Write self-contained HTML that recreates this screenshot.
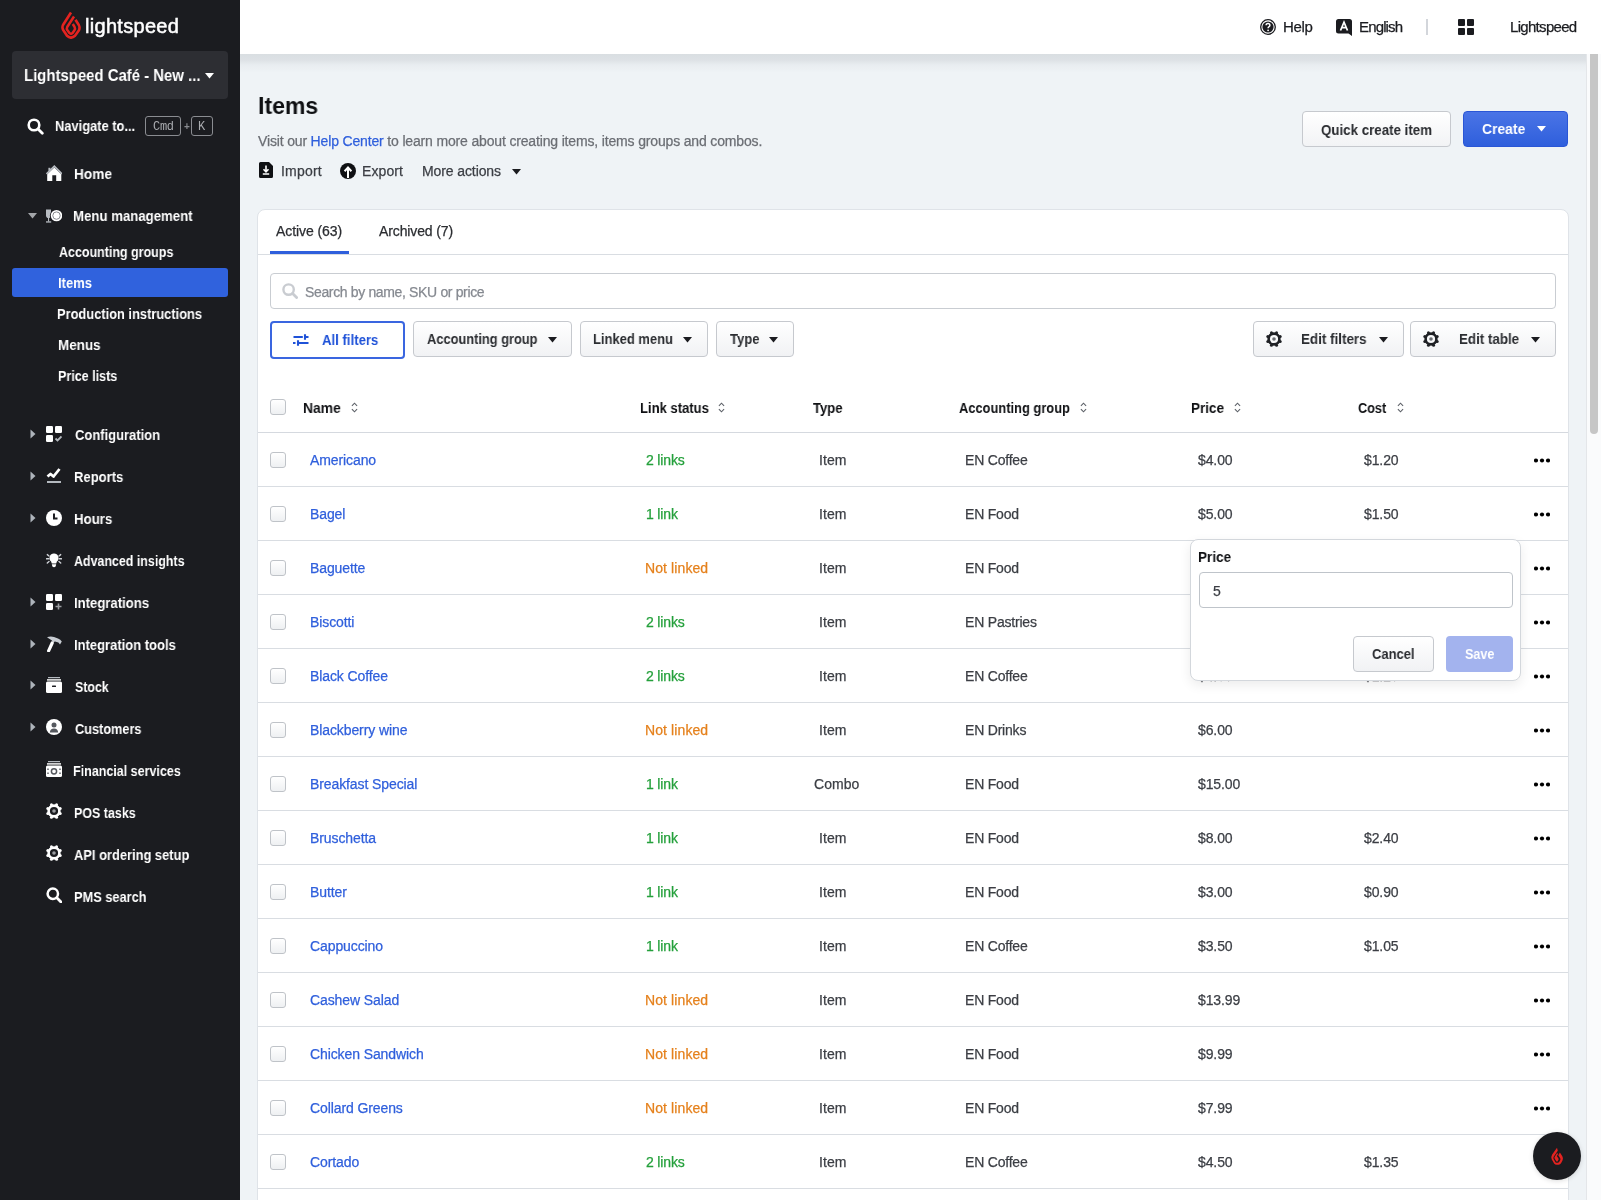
<!DOCTYPE html>
<html><head><meta charset="utf-8"><title>Items</title>
<style>
html,body{margin:0;padding:0;width:1601px;height:1200px;overflow:hidden;background:#eff3f6}
body{position:relative;font-family:"Liberation Sans",sans-serif}
.a{position:absolute}
.t{position:absolute;white-space:nowrap;will-change:transform}
.r{-webkit-text-stroke:0.25px currentColor}
</style></head><body>
<div class="a" style="left:0px;top:0px;width:240px;height:1200px;background:#1b1c20"></div>
<svg class="a" style="left:61px;top:11px" width="21" height="28" viewBox="0 0 21 28">
<path d="M10 1.5 L2 14 Q0.8 16.5 2.2 19 L6 24.8 Q10 28.5 14 24.8 L17.8 19.5 Q19.3 16.8 17.8 14 L14.5 8.8" fill="none" stroke="#e42320" stroke-width="2.6" stroke-linejoin="round"/>
<path d="M13 5.5 L6.2 16 Q5.4 17.5 6.3 19 L8.6 22.2 Q10 23.6 11.4 22.2 L13.6 19 Q14.4 17.5 13.6 16 L11.8 13" fill="none" stroke="#e42320" stroke-width="2.5" stroke-linejoin="round"/>
</svg>
<div class="t" style="left:84.5px;top:16.00px;font-size:20px;line-height:20px;font-weight:400;color:#ffffff;letter-spacing:0.3px;-webkit-text-stroke:0.5px #fff">lightspeed</div>
<div class="a" style="left:12px;top:51px;width:216px;height:48px;background:#2d2e33;border-radius:4px"></div>
<div class="t" style="left:23.52px;top:67.00px;font-size:17px;line-height:17px;font-weight:700;color:#ffffff;transform-origin:0 0;transform:scaleX(0.8774);">Lightspeed Café - New ...</div>
<svg class="a" style="left:205px;top:73px" width="9" height="6" viewBox="0 0 9 6"><path d="M0 0H9L4.5 5.5Z" fill="#fff"/></svg>
<svg class="a" style="left:27px;top:118px" width="17" height="17" viewBox="0 0 17 17"><circle cx="7" cy="7" r="5.3" fill="none" stroke="#fff" stroke-width="2.6"/><path d="M11 11L15.3 15.3" stroke="#fff" stroke-width="2.8" stroke-linecap="round"/></svg>
<div class="t" style="left:55.11px;top:119.00px;font-size:14.5px;line-height:14.5px;font-weight:700;color:#ffffff;transform-origin:0 0;transform:scaleX(0.8876);">Navigate to...</div>
<div class="a" style="left:145px;top:116px;width:36px;height:20px;border:1px solid #8a8c91;border-radius:3px;box-sizing:border-box"></div>
<div class="t" style="left:153px;top:121.00px;font-size:12px;line-height:12px;font-weight:400;color:#a9abaf;letter-spacing:-0.3px;font-family:'Liberation Mono'">Cmd</div>
<div class="t" style="left:183.5px;top:122.00px;font-size:10px;line-height:10px;font-weight:700;color:#8a8c91;letter-spacing:0px;">+</div>
<div class="a" style="left:191px;top:116px;width:22px;height:20px;border:1px solid #8a8c91;border-radius:3px;box-sizing:border-box"></div>
<div class="t" style="left:198px;top:121.00px;font-size:12px;line-height:12px;font-weight:400;color:#a9abaf;letter-spacing:0px;font-family:'Liberation Mono'">K</div>
<svg class="a" style="left:46px;top:165px" width="16" height="16" viewBox="0 0 16 16"><path d="M8.3 2.6L1.2 9.2V16H6.3V10.2H10.2V16H15.3V9.2Z" fill="#fff"/><path d="M0.5 8.9L8.3 1.2 16 8.9" fill="none" stroke="#b8bcc2" stroke-width="1.6"/><rect x="2.4" y="2.8" width="2" height="3" fill="#b8bcc2"/></svg>
<div class="t" style="left:73.56px;top:167.00px;font-size:14.6px;line-height:14.6px;font-weight:700;color:#ffffff;transform-origin:0 0;transform:scaleX(0.9359);">Home</div>
<svg class="a" style="left:28px;top:212.5px" width="9" height="6" viewBox="0 0 9 6"><path d="M0 0H9L4.5 5.5Z" fill="#a3a5a9"/></svg>
<svg class="a" style="left:46px;top:206.5px" width="16" height="16" viewBox="0 0 16 16"><path d="M0 2.5H5V8.2Q5 11 2.5 11T0 8.2Z" fill="#b8bcc2"/><rect x="2" y="10.5" width="1.1" height="4" fill="#b8bcc2"/><rect x="0" y="14.3" width="5.2" height="1.3" fill="#b8bcc2"/><circle cx="10.5" cy="8.6" r="6.6" fill="#1b1c20"/><circle cx="10.5" cy="8.6" r="5.7" fill="#fff"/><circle cx="10.5" cy="8.6" r="3.7" fill="none" stroke="#7a7d82" stroke-width="0.9"/></svg>
<div class="t" style="left:72.60px;top:209.00px;font-size:14.6px;line-height:14.6px;font-weight:700;color:#ffffff;transform-origin:0 0;transform:scaleX(0.9046);">Menu management</div>
<div class="t" style="left:58.50px;top:245.00px;font-size:14.6px;line-height:14.6px;font-weight:700;color:#ffffff;transform-origin:0 0;transform:scaleX(0.8545);">Accounting groups</div>
<div class="a" style="left:12px;top:268px;width:216px;height:29px;background:#3062dd;border-radius:3px"></div>
<div class="t" style="left:57.61px;top:276.00px;font-size:14.6px;line-height:14.6px;font-weight:700;color:#ffffff;transform-origin:0 0;transform:scaleX(0.8919);">Items</div>
<div class="t" style="left:57.12px;top:307.00px;font-size:14.6px;line-height:14.6px;font-weight:700;color:#ffffff;transform-origin:0 0;transform:scaleX(0.8810);">Production instructions</div>
<div class="t" style="left:57.58px;top:338.00px;font-size:14.6px;line-height:14.6px;font-weight:700;color:#ffffff;transform-origin:0 0;transform:scaleX(0.9222);">Menus</div>
<div class="t" style="left:57.64px;top:369.00px;font-size:14.6px;line-height:14.6px;font-weight:700;color:#ffffff;transform-origin:0 0;transform:scaleX(0.8603);">Price lists</div>
<svg class="a" style="left:30px;top:428.7px" width="6" height="10" viewBox="0 0 6 10"><path d="M0.5 0.5L5.5 5L0.5 9.5Z" fill="#aeb4bb"/></svg>
<svg class="a" style="left:46px;top:425.7px" width="16" height="16" viewBox="0 0 16 16"><rect x="0" y="0" width="7" height="7" rx="1.3" fill="#fff"/><rect x="9" y="0" width="7" height="7" rx="1.3" fill="#fff"/><rect x="0" y="9" width="7" height="7" rx="1.3" fill="#fff"/><path d="M9.5 12.5l2 2 4-4" stroke="#b4b9bf" stroke-width="1.8" fill="none"/></svg>
<div class="t" style="left:74.50px;top:428.00px;font-size:14.6px;line-height:14.6px;font-weight:700;color:#ffffff;transform-origin:0 0;transform:scaleX(0.8895);">Configuration</div>
<svg class="a" style="left:30px;top:470.6px" width="6" height="10" viewBox="0 0 6 10"><path d="M0.5 0.5L5.5 5L0.5 9.5Z" fill="#aeb4bb"/></svg>
<svg class="a" style="left:46px;top:467.6px" width="16" height="16" viewBox="0 0 16 16"><path d="M1.5 8.5L4.5 6 7.5 8.5 13.5 1" stroke="#fff" stroke-width="2.8" fill="none" stroke-linejoin="round"/><rect x="1" y="13" width="14" height="2" fill="#b4b9bf"/></svg>
<div class="t" style="left:73.61px;top:470.00px;font-size:14.6px;line-height:14.6px;font-weight:700;color:#ffffff;transform-origin:0 0;transform:scaleX(0.8944);">Reports</div>
<svg class="a" style="left:30px;top:512.6px" width="6" height="10" viewBox="0 0 6 10"><path d="M0.5 0.5L5.5 5L0.5 9.5Z" fill="#aeb4bb"/></svg>
<svg class="a" style="left:46px;top:509.6px" width="16" height="16" viewBox="0 0 16 16"><circle cx="8" cy="8" r="8" fill="#fff"/><path d="M8 3.5V8.5h3.5" stroke="#1b1c20" stroke-width="2" fill="none"/></svg>
<div class="t" style="left:73.59px;top:512.00px;font-size:14.6px;line-height:14.6px;font-weight:700;color:#ffffff;transform-origin:0 0;transform:scaleX(0.9098);">Hours</div>
<svg class="a" style="left:46px;top:551.5px" width="16" height="16" viewBox="0 0 16 16"><path d="M8 1.6A4.4 4.4 0 0 0 5.1 9.4L5.8 11.4H10.2L10.9 9.4A4.4 4.4 0 0 0 8 1.6Z" fill="#fff"/><path d="M5.8 12.3H10.2L9.6 14.5Q8 15.8 6.4 14.5Z" fill="#fff"/><path d="M1.3 2.6L3 4M0.4 6.8H2.8M1.3 11L3 9.5M14.7 2.6L13 4M15.6 6.8H13.2M14.7 11L13 9.5" stroke="#d0d3d8" stroke-width="1.4" stroke-linecap="round"/></svg>
<div class="t" style="left:73.50px;top:554.00px;font-size:14.6px;line-height:14.6px;font-weight:700;color:#ffffff;transform-origin:0 0;transform:scaleX(0.8515);">Advanced insights</div>
<svg class="a" style="left:30px;top:596.5px" width="6" height="10" viewBox="0 0 6 10"><path d="M0.5 0.5L5.5 5L0.5 9.5Z" fill="#aeb4bb"/></svg>
<svg class="a" style="left:46px;top:593.5px" width="16" height="16" viewBox="0 0 16 16"><rect x="0" y="0" width="7" height="7" rx="1.3" fill="#fff"/><rect x="9" y="0" width="7" height="7" rx="1.3" fill="#fff"/><rect x="0" y="9" width="7" height="7" rx="1.3" fill="#fff"/><path d="M12.5 9.5v6M9.5 12.5h6" stroke="#9a9ca0" stroke-width="1.6"/></svg>
<div class="t" style="left:73.60px;top:596.00px;font-size:14.6px;line-height:14.6px;font-weight:700;color:#ffffff;transform-origin:0 0;transform:scaleX(0.8988);">Integrations</div>
<svg class="a" style="left:30px;top:638.5px" width="6" height="10" viewBox="0 0 6 10"><path d="M0.5 0.5L5.5 5L0.5 9.5Z" fill="#aeb4bb"/></svg>
<svg class="a" style="left:46px;top:635.5px" width="16" height="16" viewBox="0 0 16 16"><path d="M1 1.3Q4 0 8 0.9L12 2.6Q14.6 3.8 15.8 5.6L14 8.6 12.4 6.6 9 5.6 7.2 6.2 5.6 4.2Q3.2 2.6 1 1.3Z" fill="#c8ccd2"/><path d="M6.2 7L2.6 14.8" stroke="#fff" stroke-width="3.2" stroke-linecap="round"/></svg>
<div class="t" style="left:73.61px;top:638.00px;font-size:14.6px;line-height:14.6px;font-weight:700;color:#ffffff;transform-origin:0 0;transform:scaleX(0.8903);">Integration tools</div>
<svg class="a" style="left:30px;top:680.4px" width="6" height="10" viewBox="0 0 6 10"><path d="M0.5 0.5L5.5 5L0.5 9.5Z" fill="#aeb4bb"/></svg>
<svg class="a" style="left:46px;top:677.4px" width="16" height="16" viewBox="0 0 16 16"><rect x="2" y="0" width="12" height="1.2" fill="#b4b9bf"/><rect x="1" y="2.2" width="14" height="1.4" fill="#fff"/><rect x="0" y="4.6" width="16" height="11.4" rx="1.5" fill="#fff"/><rect x="6" y="8.6" width="4" height="1.3" rx="0.5" fill="#1b1c20"/></svg>
<div class="t" style="left:74.50px;top:680.00px;font-size:14.6px;line-height:14.6px;font-weight:700;color:#ffffff;transform-origin:0 0;transform:scaleX(0.8500);">Stock</div>
<svg class="a" style="left:30px;top:722.4px" width="6" height="10" viewBox="0 0 6 10"><path d="M0.5 0.5L5.5 5L0.5 9.5Z" fill="#aeb4bb"/></svg>
<svg class="a" style="left:46px;top:719.4px" width="16" height="16" viewBox="0 0 16 16"><circle cx="8" cy="8" r="8" fill="#fff"/><circle cx="8" cy="6" r="2.5" fill="#55585e"/><path d="M3.8 13.4Q4.2 9.4 8 9.4T12.2 13.4Z" fill="#55585e"/></svg>
<div class="t" style="left:74.50px;top:722.00px;font-size:14.6px;line-height:14.6px;font-weight:700;color:#ffffff;transform-origin:0 0;transform:scaleX(0.8724);">Customers</div>
<svg class="a" style="left:46px;top:761.3px" width="16" height="16" viewBox="0 0 16 16"><rect x="2" y="0" width="12" height="1.2" fill="#b4b9bf"/><rect x="1" y="2.2" width="14" height="1.4" fill="#fff"/><rect x="0" y="4.6" width="16" height="11.4" rx="1.5" fill="#fff"/><circle cx="8" cy="10.3" r="2.6" fill="none" stroke="#55585e" stroke-width="1.5"/><path d="M2 7.5v1.5M14 7.5v1.5M2 11.5v1.5M14 11.5v1.5" stroke="#55585e" stroke-width="1.4"/></svg>
<div class="t" style="left:72.74px;top:764.00px;font-size:14.6px;line-height:14.6px;font-weight:700;color:#ffffff;transform-origin:0 0;transform:scaleX(0.8568);">Financial services</div>
<svg class="a" style="left:46px;top:803.2px" width="16" height="16" viewBox="0 0 16 16"><circle cx="8" cy="8" r="5.4" fill="none" stroke="#fff" stroke-width="2.6"/><circle cx="14.19" cy="10.56" r="1.5" fill="#fff"/><circle cx="10.56" cy="14.19" r="1.5" fill="#fff"/><circle cx="5.44" cy="14.19" r="1.5" fill="#fff"/><circle cx="1.81" cy="10.56" r="1.5" fill="#fff"/><circle cx="1.81" cy="5.44" r="1.5" fill="#fff"/><circle cx="5.44" cy="1.81" r="1.5" fill="#fff"/><circle cx="10.56" cy="1.81" r="1.5" fill="#fff"/><circle cx="14.19" cy="5.44" r="1.5" fill="#fff"/><circle cx="8" cy="8" r="1.8" fill="#9a9ca0"/></svg>
<div class="t" style="left:74.15px;top:806.00px;font-size:14.6px;line-height:14.6px;font-weight:700;color:#ffffff;transform-origin:0 0;transform:scaleX(0.8549);">POS tasks</div>
<svg class="a" style="left:46px;top:845.2px" width="16" height="16" viewBox="0 0 16 16"><circle cx="8" cy="8" r="5.4" fill="none" stroke="#fff" stroke-width="2.6"/><circle cx="14.19" cy="10.56" r="1.5" fill="#fff"/><circle cx="10.56" cy="14.19" r="1.5" fill="#fff"/><circle cx="5.44" cy="14.19" r="1.5" fill="#fff"/><circle cx="1.81" cy="10.56" r="1.5" fill="#fff"/><circle cx="1.81" cy="5.44" r="1.5" fill="#fff"/><circle cx="5.44" cy="1.81" r="1.5" fill="#fff"/><circle cx="10.56" cy="1.81" r="1.5" fill="#fff"/><circle cx="14.19" cy="5.44" r="1.5" fill="#fff"/><circle cx="8" cy="8" r="1.8" fill="#9a9ca0"/></svg>
<div class="t" style="left:73.50px;top:848.00px;font-size:14.6px;line-height:14.6px;font-weight:700;color:#ffffff;transform-origin:0 0;transform:scaleX(0.8831);">API ordering setup</div>
<svg class="a" style="left:46px;top:887.2px" width="16" height="16" viewBox="0 0 16 16"><circle cx="6.8" cy="6.8" r="5.2" fill="none" stroke="#fff" stroke-width="2.5"/><path d="M10.8 10.8L15 15" stroke="#fff" stroke-width="2.8" stroke-linecap="round"/></svg>
<div class="t" style="left:73.62px;top:890.00px;font-size:14.6px;line-height:14.6px;font-weight:700;color:#ffffff;transform-origin:0 0;transform:scaleX(0.8765);">PMS search</div>
<div class="a" style="left:240px;top:0px;width:1361px;height:54px;background:#ffffff;z-index:5"></div>
<div class="a" style="left:240px;top:54px;width:1346px;height:20px;background:linear-gradient(rgba(40,50,60,0.11),rgba(40,50,60,0.09) 6px,rgba(40,50,60,0.03) 11px,rgba(40,50,60,0) 19px);z-index:5"></div>
<svg class="a" style="left:1260px;top:19px;z-index:6" width="16" height="16" viewBox="0 0 16 16"><circle cx="8" cy="8" r="7.3" fill="none" stroke="#1b1c20" stroke-width="1.3"/><circle cx="8" cy="8" r="5.6" fill="#1b1c20"/><path d="M6.1 6.3Q6.1 4.4 8 4.4T9.9 6.2Q9.9 7.2 8.8 7.8 8.1 8.2 8.1 9.2" fill="none" stroke="#fff" stroke-width="1.5"/><circle cx="8.1" cy="11.3" r="0.9" fill="#fff"/></svg>
<div class="t r" style="left:1282.5px;top:19.00px;font-size:15px;line-height:15px;font-weight:400;color:#1b1c20;letter-spacing:-0.3px;z-index:6;">Help</div>
<svg class="a" style="left:1336px;top:19px;z-index:6" width="16" height="17" viewBox="0 0 16 17"><path d="M2.5 0h11A2.5 2.5 0 0 1 16 2.5V17l-3.5-2.5h-10A2.5 2.5 0 0 1 0 12V2.5A2.5 2.5 0 0 1 2.5 0Z" fill="#1b1c20"/><path d="M4.5 11.5L8 3.2 11.5 11.5M5.8 8.6h4.4" fill="none" stroke="#fff" stroke-width="1.7"/></svg>
<div class="t r" style="left:1358.5px;top:19.00px;font-size:15px;line-height:15px;font-weight:400;color:#1b1c20;letter-spacing:-0.85px;z-index:6;">English</div>
<div class="a" style="left:1426px;top:19px;width:2px;height:16px;background:#d3d6db;z-index:6"></div>
<svg class="a" style="left:1458px;top:19px;z-index:6" width="16" height="16" viewBox="0 0 16 16"><rect x="0" y="0" width="7" height="7" rx="1" fill="#1b1c20"/><rect x="9" y="0" width="7" height="7" rx="1" fill="#1b1c20"/><rect x="0" y="9" width="7" height="7" rx="1" fill="#1b1c20"/><rect x="9" y="9" width="7" height="7" rx="1" fill="#1b1c20"/></svg>
<div class="t r" style="left:1510px;top:19.00px;font-size:15px;line-height:15px;font-weight:400;color:#1b1c20;letter-spacing:-0.69px;z-index:6;">Lightspeed</div>
<div class="a" style="left:1586px;top:54px;width:15px;height:1146px;background:#fafbfc;border-left:1px solid #e4e6e9;box-sizing:border-box;z-index:6"></div>
<div class="a" style="left:1590px;top:54px;width:8px;height:380px;background:#c6c6c6;border-radius:0 0 4px 4px;z-index:6"></div>
<div class="t" style="left:258.04px;top:94.00px;font-size:24px;line-height:24px;font-weight:700;color:#0f1013;transform-origin:0 0;transform:scaleX(0.9607);">Items</div>
<div class="t r" style="left:258px;top:134.00px;font-size:14px;line-height:14px;font-weight:400;color:#6b6e74;letter-spacing:-0.16px;">Visit our <span style="color:#2f5fdc">Help Center</span> to learn more about creating items, items groups and combos.</div>
<svg class="a" style="left:259px;top:162px" width="14" height="16" viewBox="0 0 14 16"><path d="M1.5 0H10L14 4V14.5A1.5 1.5 0 0 1 12.5 16H1.5A1.5 1.5 0 0 1 0 14.5V1.5A1.5 1.5 0 0 1 1.5 0Z" fill="#0f1013"/><path d="M7 3.5V9.5M4.5 7.2L7 9.8 9.5 7.2M3.8 12h6.4" stroke="#fff" stroke-width="1.6" fill="none"/></svg>
<div class="t r" style="left:280.6px;top:164.00px;font-size:14px;line-height:14px;font-weight:400;color:#3b3e44;letter-spacing:0.2px;">Import</div>
<svg class="a" style="left:340px;top:163px" width="16" height="16" viewBox="0 0 16 16"><circle cx="8" cy="8" r="8" fill="#0f1013"/><path d="M8 15V5M4.6 8.3L8 4.6 11.4 8.3" stroke="#fff" stroke-width="2" fill="none"/></svg>
<div class="t r" style="left:362.4px;top:164.00px;font-size:14px;line-height:14px;font-weight:400;color:#3b3e44;letter-spacing:0.1px;">Export</div>
<div class="t r" style="left:422.4px;top:164.00px;font-size:14px;line-height:14px;font-weight:400;color:#3b3e44;letter-spacing:-0.1px;">More actions</div>
<svg class="a" style="left:512px;top:168.5px" width="9" height="6" viewBox="0 0 9 6"><path d="M0 0H9L4.5 5.5Z" fill="#1b1c20"/></svg>
<div class="a" style="left:1302px;top:111px;width:149px;height:36px;background:linear-gradient(#ffffff,#f2f3f5);border:1px solid #c6c9ce;border-radius:4px;box-sizing:border-box"></div>
<div class="t" style="left:1321.00px;top:122.00px;font-size:15.5px;line-height:15.5px;font-weight:700;color:#2b2d31;transform-origin:0 0;transform:scaleX(0.8589);">Quick create item</div>
<div class="a" style="left:1463px;top:111px;width:105px;height:36px;background:linear-gradient(#4a74e6,#2f5fdc);border:1px solid #2a56d6;border-radius:4px;box-sizing:border-box"></div>
<div class="t" style="left:1482.00px;top:121.00px;font-size:15.5px;line-height:15.5px;font-weight:700;color:#ffffff;transform-origin:0 0;transform:scaleX(0.8958);">Create</div>
<svg class="a" style="left:1537px;top:126px" width="9" height="6" viewBox="0 0 9 6"><path d="M0 0H9L4.5 5.5Z" fill="#fff"/></svg>
<div class="a" style="left:257px;top:209px;width:1312px;height:1100px;background:#fff;border:1px solid #dfe3e8;border-radius:8px;box-sizing:border-box"></div>
<div class="t r" style="left:276.3px;top:224.00px;font-size:14px;line-height:14px;font-weight:400;color:#2b2d31;letter-spacing:-0.08px;">Active (63)</div>
<div class="t r" style="left:378.9px;top:224.00px;font-size:14px;line-height:14px;font-weight:400;color:#2b2d31;letter-spacing:-0.12px;">Archived (7)</div>
<div class="a" style="left:258px;top:254px;width:1310px;height:1px;background:#d9dde2"></div>
<div class="a" style="left:270px;top:251px;width:79px;height:3px;background:#2f5fdc"></div>
<div class="a" style="left:270px;top:273px;width:1286px;height:36px;background:#fff;border:1px solid #c9cdd2;border-radius:4px;box-sizing:border-box"></div>
<svg class="a" style="left:282px;top:283px" width="16" height="16" viewBox="0 0 16 16"><circle cx="6.6" cy="6.6" r="5.2" fill="none" stroke="#c9ccd1" stroke-width="2.4"/><path d="M10.6 10.6L14.6 14.6" stroke="#c9ccd1" stroke-width="2.8" stroke-linecap="round"/></svg>
<div class="t r" style="left:305.3px;top:285.00px;font-size:14px;line-height:14px;font-weight:400;color:#858990;letter-spacing:-0.35px;">Search by name, SKU or price</div>
<div class="a" style="left:270px;top:321px;width:135px;height:38px;background:#fff;border:2px solid #3a66e0;border-radius:4px;box-sizing:border-box"></div>
<svg class="a" style="left:292px;top:334px" width="18" height="13" viewBox="0 0 18 13"><path d="M1.5 3H10.8M13 3H16.5M1 9H3.5M6 9H16.5" stroke="#1f52d8" stroke-width="1.9"/><path d="M13 0.3V5.7M6 6.3V11.7" stroke="#1f52d8" stroke-width="2.1"/></svg>
<div class="t" style="left:321.50px;top:332.00px;font-size:15px;line-height:15px;font-weight:700;color:#1f52d8;transform-origin:0 0;transform:scaleX(0.8781);">All filters</div>
<div class="a" style="left:413px;top:321px;width:159px;height:36px;background:linear-gradient(#ffffff,#f1f2f4);border:1px solid #c6c9ce;border-radius:4px;box-sizing:border-box"></div>
<div class="t" style="left:426.80px;top:332.00px;font-size:14.8px;line-height:14.8px;font-weight:700;color:#2b2d31;transform-origin:0 0;transform:scaleX(0.8677);">Accounting group</div>
<svg class="a" style="left:547.5px;top:337px" width="9" height="6" viewBox="0 0 9 6"><path d="M0 0H9L4.5 5.5Z" fill="#1b1c20"/></svg>
<div class="a" style="left:580px;top:321px;width:128px;height:36px;background:linear-gradient(#ffffff,#f1f2f4);border:1px solid #c6c9ce;border-radius:4px;box-sizing:border-box"></div>
<div class="t" style="left:592.62px;top:332.00px;font-size:14.8px;line-height:14.8px;font-weight:700;color:#2b2d31;transform-origin:0 0;transform:scaleX(0.8756);">Linked menu</div>
<svg class="a" style="left:683px;top:337px" width="9" height="6" viewBox="0 0 9 6"><path d="M0 0H9L4.5 5.5Z" fill="#1b1c20"/></svg>
<div class="a" style="left:716px;top:321px;width:78px;height:36px;background:linear-gradient(#ffffff,#f1f2f4);border:1px solid #c6c9ce;border-radius:4px;box-sizing:border-box"></div>
<div class="t" style="left:729.50px;top:332.00px;font-size:14.8px;line-height:14.8px;font-weight:700;color:#2b2d31;transform-origin:0 0;transform:scaleX(0.8818);">Type</div>
<svg class="a" style="left:769px;top:337px" width="9" height="6" viewBox="0 0 9 6"><path d="M0 0H9L4.5 5.5Z" fill="#1b1c20"/></svg>
<div class="a" style="left:1253px;top:321px;width:151px;height:36px;background:linear-gradient(#ffffff,#f1f2f4);border:1px solid #c6c9ce;border-radius:4px;box-sizing:border-box"></div>
<svg class="a" style="left:1266px;top:331px" width="16" height="16" viewBox="0 0 16 16"><circle cx="8" cy="8" r="5.4" fill="none" stroke="#1f2125" stroke-width="2.6"/><circle cx="14.19" cy="10.56" r="1.5" fill="#1f2125"/><circle cx="10.56" cy="14.19" r="1.5" fill="#1f2125"/><circle cx="5.44" cy="14.19" r="1.5" fill="#1f2125"/><circle cx="1.81" cy="10.56" r="1.5" fill="#1f2125"/><circle cx="1.81" cy="5.44" r="1.5" fill="#1f2125"/><circle cx="5.44" cy="1.81" r="1.5" fill="#1f2125"/><circle cx="10.56" cy="1.81" r="1.5" fill="#1f2125"/><circle cx="14.19" cy="5.44" r="1.5" fill="#1f2125"/><circle cx="8" cy="8" r="1.8" fill="#6b6e73"/></svg>
<div class="t" style="left:1301.49px;top:332.00px;font-size:14.8px;line-height:14.8px;font-weight:700;color:#2b2d31;transform-origin:0 0;transform:scaleX(0.9070);">Edit filters</div>
<svg class="a" style="left:1379px;top:337px" width="9" height="6" viewBox="0 0 9 6"><path d="M0 0H9L4.5 5.5Z" fill="#1b1c20"/></svg>
<div class="a" style="left:1410px;top:321px;width:146px;height:36px;background:linear-gradient(#ffffff,#f1f2f4);border:1px solid #c6c9ce;border-radius:4px;box-sizing:border-box"></div>
<svg class="a" style="left:1423px;top:331px" width="16" height="16" viewBox="0 0 16 16"><circle cx="8" cy="8" r="5.4" fill="none" stroke="#1f2125" stroke-width="2.6"/><circle cx="14.19" cy="10.56" r="1.5" fill="#1f2125"/><circle cx="10.56" cy="14.19" r="1.5" fill="#1f2125"/><circle cx="5.44" cy="14.19" r="1.5" fill="#1f2125"/><circle cx="1.81" cy="10.56" r="1.5" fill="#1f2125"/><circle cx="1.81" cy="5.44" r="1.5" fill="#1f2125"/><circle cx="5.44" cy="1.81" r="1.5" fill="#1f2125"/><circle cx="10.56" cy="1.81" r="1.5" fill="#1f2125"/><circle cx="14.19" cy="5.44" r="1.5" fill="#1f2125"/><circle cx="8" cy="8" r="1.8" fill="#6b6e73"/></svg>
<div class="t" style="left:1458.80px;top:332.00px;font-size:14.8px;line-height:14.8px;font-weight:700;color:#2b2d31;transform-origin:0 0;transform:scaleX(0.9031);">Edit table</div>
<svg class="a" style="left:1531px;top:337px" width="9" height="6" viewBox="0 0 9 6"><path d="M0 0H9L4.5 5.5Z" fill="#1b1c20"/></svg>
<div class="a" style="left:270px;top:399px;width:16px;height:16px;background:linear-gradient(#ffffff,#eef0f2);border:1px solid #bfc3c8;border-radius:3px;box-sizing:border-box"></div>
<div class="t" style="left:303.04px;top:401.00px;font-size:14.5px;line-height:14.5px;font-weight:700;color:#0f1013;transform-origin:0 0;transform:scaleX(0.9553);">Name</div>
<svg class="a" style="left:350.5px;top:401.5px" width="7" height="11" viewBox="0 0 7 11"><path d="M0.9 3.9L3.5 1.2 6.1 3.9M0.9 7.1L3.5 9.8 6.1 7.1" stroke="#5d6168" stroke-width="1.1" fill="none"/></svg>
<div class="t" style="left:639.50px;top:401.00px;font-size:14.5px;line-height:14.5px;font-weight:700;color:#0f1013;transform-origin:0 0;transform:scaleX(0.9000);">Link status</div>
<svg class="a" style="left:717.5px;top:401.5px" width="7" height="11" viewBox="0 0 7 11"><path d="M0.9 3.9L3.5 1.2 6.1 3.9M0.9 7.1L3.5 9.8 6.1 7.1" stroke="#5d6168" stroke-width="1.1" fill="none"/></svg>
<div class="t" style="left:812.80px;top:401.00px;font-size:14.5px;line-height:14.5px;font-weight:700;color:#0f1013;transform-origin:0 0;transform:scaleX(0.9000);">Type</div>
<div class="t" style="left:958.80px;top:401.00px;font-size:14.5px;line-height:14.5px;font-weight:700;color:#0f1013;transform-origin:0 0;transform:scaleX(0.8880);">Accounting group</div>
<svg class="a" style="left:1079.5px;top:401.5px" width="7" height="11" viewBox="0 0 7 11"><path d="M0.9 3.9L3.5 1.2 6.1 3.9M0.9 7.1L3.5 9.8 6.1 7.1" stroke="#5d6168" stroke-width="1.1" fill="none"/></svg>
<div class="t" style="left:1190.97px;top:401.00px;font-size:14.5px;line-height:14.5px;font-weight:700;color:#0f1013;transform-origin:0 0;transform:scaleX(0.9294);">Price</div>
<svg class="a" style="left:1233.5px;top:401.5px" width="7" height="11" viewBox="0 0 7 11"><path d="M0.9 3.9L3.5 1.2 6.1 3.9M0.9 7.1L3.5 9.8 6.1 7.1" stroke="#5d6168" stroke-width="1.1" fill="none"/></svg>
<div class="t" style="left:1358.10px;top:401.00px;font-size:14.5px;line-height:14.5px;font-weight:700;color:#0f1013;transform-origin:0 0;transform:scaleX(0.8727);">Cost</div>
<svg class="a" style="left:1397px;top:401.5px" width="7" height="11" viewBox="0 0 7 11"><path d="M0.9 3.9L3.5 1.2 6.1 3.9M0.9 7.1L3.5 9.8 6.1 7.1" stroke="#5d6168" stroke-width="1.1" fill="none"/></svg>
<div class="a" style="left:258px;top:432px;width:1310px;height:1px;background:#d5d9df"></div>
<div class="a" style="left:270px;top:452.4px;width:16px;height:16px;background:linear-gradient(#ffffff,#eef0f2);border:1px solid #bfc3c8;border-radius:3px;box-sizing:border-box"></div>
<div class="t r" style="left:310.3px;top:453.00px;font-size:14px;line-height:14px;font-weight:400;color:#2f5fdc;letter-spacing:-0.1px;">Americano</div>
<div class="t r" style="left:646.4px;top:453.00px;font-size:14px;line-height:14px;font-weight:400;color:#24a03b;letter-spacing:-0.16px;">2 links</div>
<div class="t r" style="left:819.4px;top:453.00px;font-size:14px;line-height:14px;font-weight:400;color:#3b3e44;letter-spacing:0.05px;">Item</div>
<div class="t r" style="left:964.8px;top:453.00px;font-size:14px;line-height:14px;font-weight:400;color:#3b3e44;letter-spacing:-0.2px;">EN Coffee</div>
<div class="t r" style="left:1197.5px;top:453.00px;font-size:14px;line-height:14px;font-weight:400;color:#3b3e44;letter-spacing:-0.1px;">$4.00</div>
<div class="t r" style="left:1363.5px;top:453.00px;font-size:14px;line-height:14px;font-weight:400;color:#3b3e44;letter-spacing:-0.1px;">$1.20</div>
<svg class="a" style="left:1534px;top:457.5px" width="16" height="5" viewBox="0 0 16 5"><circle cx="2" cy="2.5" r="2.1" fill="#000"/><circle cx="8" cy="2.5" r="2.1" fill="#000"/><circle cx="14" cy="2.5" r="2.1" fill="#000"/></svg>
<div class="a" style="left:258px;top:486px;width:1310px;height:1px;background:#d9dde2"></div>
<div class="a" style="left:270px;top:506.4px;width:16px;height:16px;background:linear-gradient(#ffffff,#eef0f2);border:1px solid #bfc3c8;border-radius:3px;box-sizing:border-box"></div>
<div class="t r" style="left:310.3px;top:507.00px;font-size:14px;line-height:14px;font-weight:400;color:#2f5fdc;letter-spacing:-0.1px;">Bagel</div>
<div class="t r" style="left:646.4px;top:507.00px;font-size:14px;line-height:14px;font-weight:400;color:#24a03b;letter-spacing:-0.16px;">1 link</div>
<div class="t r" style="left:819.4px;top:507.00px;font-size:14px;line-height:14px;font-weight:400;color:#3b3e44;letter-spacing:0.05px;">Item</div>
<div class="t r" style="left:964.8px;top:507.00px;font-size:14px;line-height:14px;font-weight:400;color:#3b3e44;letter-spacing:-0.2px;">EN Food</div>
<div class="t r" style="left:1197.5px;top:507.00px;font-size:14px;line-height:14px;font-weight:400;color:#3b3e44;letter-spacing:-0.1px;">$5.00</div>
<div class="t r" style="left:1363.5px;top:507.00px;font-size:14px;line-height:14px;font-weight:400;color:#3b3e44;letter-spacing:-0.1px;">$1.50</div>
<svg class="a" style="left:1534px;top:511.5px" width="16" height="5" viewBox="0 0 16 5"><circle cx="2" cy="2.5" r="2.1" fill="#000"/><circle cx="8" cy="2.5" r="2.1" fill="#000"/><circle cx="14" cy="2.5" r="2.1" fill="#000"/></svg>
<div class="a" style="left:258px;top:540px;width:1310px;height:1px;background:#d9dde2"></div>
<div class="a" style="left:270px;top:560.4px;width:16px;height:16px;background:linear-gradient(#ffffff,#eef0f2);border:1px solid #bfc3c8;border-radius:3px;box-sizing:border-box"></div>
<div class="t r" style="left:310.3px;top:561.00px;font-size:14px;line-height:14px;font-weight:400;color:#2f5fdc;letter-spacing:-0.1px;">Baguette</div>
<div class="t r" style="left:645px;top:561.00px;font-size:14px;line-height:14px;font-weight:400;color:#e5811c;letter-spacing:0.1px;">Not linked</div>
<div class="t r" style="left:819.4px;top:561.00px;font-size:14px;line-height:14px;font-weight:400;color:#3b3e44;letter-spacing:0.05px;">Item</div>
<div class="t r" style="left:964.8px;top:561.00px;font-size:14px;line-height:14px;font-weight:400;color:#3b3e44;letter-spacing:-0.2px;">EN Food</div>
<div class="t r" style="left:1197.5px;top:561.00px;font-size:14px;line-height:14px;font-weight:400;color:#3b3e44;letter-spacing:-0.1px;">$4.00</div>
<div class="t r" style="left:1363.5px;top:561.00px;font-size:14px;line-height:14px;font-weight:400;color:#3b3e44;letter-spacing:-0.1px;">$1.20</div>
<svg class="a" style="left:1534px;top:565.5px" width="16" height="5" viewBox="0 0 16 5"><circle cx="2" cy="2.5" r="2.1" fill="#000"/><circle cx="8" cy="2.5" r="2.1" fill="#000"/><circle cx="14" cy="2.5" r="2.1" fill="#000"/></svg>
<div class="a" style="left:258px;top:594px;width:1310px;height:1px;background:#d9dde2"></div>
<div class="a" style="left:270px;top:614.4px;width:16px;height:16px;background:linear-gradient(#ffffff,#eef0f2);border:1px solid #bfc3c8;border-radius:3px;box-sizing:border-box"></div>
<div class="t r" style="left:310.3px;top:615.00px;font-size:14px;line-height:14px;font-weight:400;color:#2f5fdc;letter-spacing:-0.1px;">Biscotti</div>
<div class="t r" style="left:646.4px;top:615.00px;font-size:14px;line-height:14px;font-weight:400;color:#24a03b;letter-spacing:-0.16px;">2 links</div>
<div class="t r" style="left:819.4px;top:615.00px;font-size:14px;line-height:14px;font-weight:400;color:#3b3e44;letter-spacing:0.05px;">Item</div>
<div class="t r" style="left:964.8px;top:615.00px;font-size:14px;line-height:14px;font-weight:400;color:#3b3e44;letter-spacing:-0.2px;">EN Pastries</div>
<div class="t r" style="left:1197.5px;top:615.00px;font-size:14px;line-height:14px;font-weight:400;color:#3b3e44;letter-spacing:-0.1px;">$4.00</div>
<div class="t r" style="left:1363.5px;top:615.00px;font-size:14px;line-height:14px;font-weight:400;color:#3b3e44;letter-spacing:-0.1px;">$1.20</div>
<svg class="a" style="left:1534px;top:619.5px" width="16" height="5" viewBox="0 0 16 5"><circle cx="2" cy="2.5" r="2.1" fill="#000"/><circle cx="8" cy="2.5" r="2.1" fill="#000"/><circle cx="14" cy="2.5" r="2.1" fill="#000"/></svg>
<div class="a" style="left:258px;top:648px;width:1310px;height:1px;background:#d9dde2"></div>
<div class="a" style="left:270px;top:668.4px;width:16px;height:16px;background:linear-gradient(#ffffff,#eef0f2);border:1px solid #bfc3c8;border-radius:3px;box-sizing:border-box"></div>
<div class="t r" style="left:310.3px;top:669.00px;font-size:14px;line-height:14px;font-weight:400;color:#2f5fdc;letter-spacing:-0.1px;">Black Coffee</div>
<div class="t r" style="left:646.4px;top:669.00px;font-size:14px;line-height:14px;font-weight:400;color:#24a03b;letter-spacing:-0.16px;">2 links</div>
<div class="t r" style="left:819.4px;top:669.00px;font-size:14px;line-height:14px;font-weight:400;color:#3b3e44;letter-spacing:0.05px;">Item</div>
<div class="t r" style="left:964.8px;top:669.00px;font-size:14px;line-height:14px;font-weight:400;color:#3b3e44;letter-spacing:-0.2px;">EN Coffee</div>
<div class="t r" style="left:1197.5px;top:669.00px;font-size:14px;line-height:14px;font-weight:400;color:#3b3e44;letter-spacing:-0.1px;">$4.00</div>
<div class="t r" style="left:1363.5px;top:669.00px;font-size:14px;line-height:14px;font-weight:400;color:#3b3e44;letter-spacing:-0.1px;">$1.20</div>
<svg class="a" style="left:1534px;top:673.5px" width="16" height="5" viewBox="0 0 16 5"><circle cx="2" cy="2.5" r="2.1" fill="#000"/><circle cx="8" cy="2.5" r="2.1" fill="#000"/><circle cx="14" cy="2.5" r="2.1" fill="#000"/></svg>
<div class="a" style="left:258px;top:702px;width:1310px;height:1px;background:#d9dde2"></div>
<div class="a" style="left:270px;top:722.4px;width:16px;height:16px;background:linear-gradient(#ffffff,#eef0f2);border:1px solid #bfc3c8;border-radius:3px;box-sizing:border-box"></div>
<div class="t r" style="left:310.3px;top:723.00px;font-size:14px;line-height:14px;font-weight:400;color:#2f5fdc;letter-spacing:-0.1px;">Blackberry wine</div>
<div class="t r" style="left:645px;top:723.00px;font-size:14px;line-height:14px;font-weight:400;color:#e5811c;letter-spacing:0.1px;">Not linked</div>
<div class="t r" style="left:819.4px;top:723.00px;font-size:14px;line-height:14px;font-weight:400;color:#3b3e44;letter-spacing:0.05px;">Item</div>
<div class="t r" style="left:964.8px;top:723.00px;font-size:14px;line-height:14px;font-weight:400;color:#3b3e44;letter-spacing:-0.2px;">EN Drinks</div>
<div class="t r" style="left:1197.5px;top:723.00px;font-size:14px;line-height:14px;font-weight:400;color:#3b3e44;letter-spacing:-0.1px;">$6.00</div>
<svg class="a" style="left:1534px;top:727.5px" width="16" height="5" viewBox="0 0 16 5"><circle cx="2" cy="2.5" r="2.1" fill="#000"/><circle cx="8" cy="2.5" r="2.1" fill="#000"/><circle cx="14" cy="2.5" r="2.1" fill="#000"/></svg>
<div class="a" style="left:258px;top:756px;width:1310px;height:1px;background:#d9dde2"></div>
<div class="a" style="left:270px;top:776.4px;width:16px;height:16px;background:linear-gradient(#ffffff,#eef0f2);border:1px solid #bfc3c8;border-radius:3px;box-sizing:border-box"></div>
<div class="t r" style="left:310.3px;top:777.00px;font-size:14px;line-height:14px;font-weight:400;color:#2f5fdc;letter-spacing:-0.1px;">Breakfast Special</div>
<div class="t r" style="left:646.4px;top:777.00px;font-size:14px;line-height:14px;font-weight:400;color:#24a03b;letter-spacing:-0.16px;">1 link</div>
<div class="t r" style="left:813.5px;top:777.00px;font-size:14px;line-height:14px;font-weight:400;color:#3b3e44;letter-spacing:0.05px;">Combo</div>
<div class="t r" style="left:964.8px;top:777.00px;font-size:14px;line-height:14px;font-weight:400;color:#3b3e44;letter-spacing:-0.2px;">EN Food</div>
<div class="t r" style="left:1197.5px;top:777.00px;font-size:14px;line-height:14px;font-weight:400;color:#3b3e44;letter-spacing:-0.1px;">$15.00</div>
<svg class="a" style="left:1534px;top:781.5px" width="16" height="5" viewBox="0 0 16 5"><circle cx="2" cy="2.5" r="2.1" fill="#000"/><circle cx="8" cy="2.5" r="2.1" fill="#000"/><circle cx="14" cy="2.5" r="2.1" fill="#000"/></svg>
<div class="a" style="left:258px;top:810px;width:1310px;height:1px;background:#d9dde2"></div>
<div class="a" style="left:270px;top:830.4px;width:16px;height:16px;background:linear-gradient(#ffffff,#eef0f2);border:1px solid #bfc3c8;border-radius:3px;box-sizing:border-box"></div>
<div class="t r" style="left:310.3px;top:831.00px;font-size:14px;line-height:14px;font-weight:400;color:#2f5fdc;letter-spacing:-0.1px;">Bruschetta</div>
<div class="t r" style="left:646.4px;top:831.00px;font-size:14px;line-height:14px;font-weight:400;color:#24a03b;letter-spacing:-0.16px;">1 link</div>
<div class="t r" style="left:819.4px;top:831.00px;font-size:14px;line-height:14px;font-weight:400;color:#3b3e44;letter-spacing:0.05px;">Item</div>
<div class="t r" style="left:964.8px;top:831.00px;font-size:14px;line-height:14px;font-weight:400;color:#3b3e44;letter-spacing:-0.2px;">EN Food</div>
<div class="t r" style="left:1197.5px;top:831.00px;font-size:14px;line-height:14px;font-weight:400;color:#3b3e44;letter-spacing:-0.1px;">$8.00</div>
<div class="t r" style="left:1363.5px;top:831.00px;font-size:14px;line-height:14px;font-weight:400;color:#3b3e44;letter-spacing:-0.1px;">$2.40</div>
<svg class="a" style="left:1534px;top:835.5px" width="16" height="5" viewBox="0 0 16 5"><circle cx="2" cy="2.5" r="2.1" fill="#000"/><circle cx="8" cy="2.5" r="2.1" fill="#000"/><circle cx="14" cy="2.5" r="2.1" fill="#000"/></svg>
<div class="a" style="left:258px;top:864px;width:1310px;height:1px;background:#d9dde2"></div>
<div class="a" style="left:270px;top:884.4px;width:16px;height:16px;background:linear-gradient(#ffffff,#eef0f2);border:1px solid #bfc3c8;border-radius:3px;box-sizing:border-box"></div>
<div class="t r" style="left:310.3px;top:885.00px;font-size:14px;line-height:14px;font-weight:400;color:#2f5fdc;letter-spacing:-0.1px;">Butter</div>
<div class="t r" style="left:646.4px;top:885.00px;font-size:14px;line-height:14px;font-weight:400;color:#24a03b;letter-spacing:-0.16px;">1 link</div>
<div class="t r" style="left:819.4px;top:885.00px;font-size:14px;line-height:14px;font-weight:400;color:#3b3e44;letter-spacing:0.05px;">Item</div>
<div class="t r" style="left:964.8px;top:885.00px;font-size:14px;line-height:14px;font-weight:400;color:#3b3e44;letter-spacing:-0.2px;">EN Food</div>
<div class="t r" style="left:1197.5px;top:885.00px;font-size:14px;line-height:14px;font-weight:400;color:#3b3e44;letter-spacing:-0.1px;">$3.00</div>
<div class="t r" style="left:1363.5px;top:885.00px;font-size:14px;line-height:14px;font-weight:400;color:#3b3e44;letter-spacing:-0.1px;">$0.90</div>
<svg class="a" style="left:1534px;top:889.5px" width="16" height="5" viewBox="0 0 16 5"><circle cx="2" cy="2.5" r="2.1" fill="#000"/><circle cx="8" cy="2.5" r="2.1" fill="#000"/><circle cx="14" cy="2.5" r="2.1" fill="#000"/></svg>
<div class="a" style="left:258px;top:918px;width:1310px;height:1px;background:#d9dde2"></div>
<div class="a" style="left:270px;top:938.4px;width:16px;height:16px;background:linear-gradient(#ffffff,#eef0f2);border:1px solid #bfc3c8;border-radius:3px;box-sizing:border-box"></div>
<div class="t r" style="left:310.3px;top:939.00px;font-size:14px;line-height:14px;font-weight:400;color:#2f5fdc;letter-spacing:-0.1px;">Cappuccino</div>
<div class="t r" style="left:646.4px;top:939.00px;font-size:14px;line-height:14px;font-weight:400;color:#24a03b;letter-spacing:-0.16px;">1 link</div>
<div class="t r" style="left:819.4px;top:939.00px;font-size:14px;line-height:14px;font-weight:400;color:#3b3e44;letter-spacing:0.05px;">Item</div>
<div class="t r" style="left:964.8px;top:939.00px;font-size:14px;line-height:14px;font-weight:400;color:#3b3e44;letter-spacing:-0.2px;">EN Coffee</div>
<div class="t r" style="left:1197.5px;top:939.00px;font-size:14px;line-height:14px;font-weight:400;color:#3b3e44;letter-spacing:-0.1px;">$3.50</div>
<div class="t r" style="left:1363.5px;top:939.00px;font-size:14px;line-height:14px;font-weight:400;color:#3b3e44;letter-spacing:-0.1px;">$1.05</div>
<svg class="a" style="left:1534px;top:943.5px" width="16" height="5" viewBox="0 0 16 5"><circle cx="2" cy="2.5" r="2.1" fill="#000"/><circle cx="8" cy="2.5" r="2.1" fill="#000"/><circle cx="14" cy="2.5" r="2.1" fill="#000"/></svg>
<div class="a" style="left:258px;top:972px;width:1310px;height:1px;background:#d9dde2"></div>
<div class="a" style="left:270px;top:992.4px;width:16px;height:16px;background:linear-gradient(#ffffff,#eef0f2);border:1px solid #bfc3c8;border-radius:3px;box-sizing:border-box"></div>
<div class="t r" style="left:310.3px;top:993.00px;font-size:14px;line-height:14px;font-weight:400;color:#2f5fdc;letter-spacing:-0.1px;">Cashew Salad</div>
<div class="t r" style="left:645px;top:993.00px;font-size:14px;line-height:14px;font-weight:400;color:#e5811c;letter-spacing:0.1px;">Not linked</div>
<div class="t r" style="left:819.4px;top:993.00px;font-size:14px;line-height:14px;font-weight:400;color:#3b3e44;letter-spacing:0.05px;">Item</div>
<div class="t r" style="left:964.8px;top:993.00px;font-size:14px;line-height:14px;font-weight:400;color:#3b3e44;letter-spacing:-0.2px;">EN Food</div>
<div class="t r" style="left:1197.5px;top:993.00px;font-size:14px;line-height:14px;font-weight:400;color:#3b3e44;letter-spacing:-0.1px;">$13.99</div>
<svg class="a" style="left:1534px;top:997.5px" width="16" height="5" viewBox="0 0 16 5"><circle cx="2" cy="2.5" r="2.1" fill="#000"/><circle cx="8" cy="2.5" r="2.1" fill="#000"/><circle cx="14" cy="2.5" r="2.1" fill="#000"/></svg>
<div class="a" style="left:258px;top:1026px;width:1310px;height:1px;background:#d9dde2"></div>
<div class="a" style="left:270px;top:1046.4px;width:16px;height:16px;background:linear-gradient(#ffffff,#eef0f2);border:1px solid #bfc3c8;border-radius:3px;box-sizing:border-box"></div>
<div class="t r" style="left:310.3px;top:1047.00px;font-size:14px;line-height:14px;font-weight:400;color:#2f5fdc;letter-spacing:-0.1px;">Chicken Sandwich</div>
<div class="t r" style="left:645px;top:1047.00px;font-size:14px;line-height:14px;font-weight:400;color:#e5811c;letter-spacing:0.1px;">Not linked</div>
<div class="t r" style="left:819.4px;top:1047.00px;font-size:14px;line-height:14px;font-weight:400;color:#3b3e44;letter-spacing:0.05px;">Item</div>
<div class="t r" style="left:964.8px;top:1047.00px;font-size:14px;line-height:14px;font-weight:400;color:#3b3e44;letter-spacing:-0.2px;">EN Food</div>
<div class="t r" style="left:1197.5px;top:1047.00px;font-size:14px;line-height:14px;font-weight:400;color:#3b3e44;letter-spacing:-0.1px;">$9.99</div>
<svg class="a" style="left:1534px;top:1051.5px" width="16" height="5" viewBox="0 0 16 5"><circle cx="2" cy="2.5" r="2.1" fill="#000"/><circle cx="8" cy="2.5" r="2.1" fill="#000"/><circle cx="14" cy="2.5" r="2.1" fill="#000"/></svg>
<div class="a" style="left:258px;top:1080px;width:1310px;height:1px;background:#d9dde2"></div>
<div class="a" style="left:270px;top:1100.4px;width:16px;height:16px;background:linear-gradient(#ffffff,#eef0f2);border:1px solid #bfc3c8;border-radius:3px;box-sizing:border-box"></div>
<div class="t r" style="left:310.3px;top:1101.00px;font-size:14px;line-height:14px;font-weight:400;color:#2f5fdc;letter-spacing:-0.1px;">Collard Greens</div>
<div class="t r" style="left:645px;top:1101.00px;font-size:14px;line-height:14px;font-weight:400;color:#e5811c;letter-spacing:0.1px;">Not linked</div>
<div class="t r" style="left:819.4px;top:1101.00px;font-size:14px;line-height:14px;font-weight:400;color:#3b3e44;letter-spacing:0.05px;">Item</div>
<div class="t r" style="left:964.8px;top:1101.00px;font-size:14px;line-height:14px;font-weight:400;color:#3b3e44;letter-spacing:-0.2px;">EN Food</div>
<div class="t r" style="left:1197.5px;top:1101.00px;font-size:14px;line-height:14px;font-weight:400;color:#3b3e44;letter-spacing:-0.1px;">$7.99</div>
<svg class="a" style="left:1534px;top:1105.5px" width="16" height="5" viewBox="0 0 16 5"><circle cx="2" cy="2.5" r="2.1" fill="#000"/><circle cx="8" cy="2.5" r="2.1" fill="#000"/><circle cx="14" cy="2.5" r="2.1" fill="#000"/></svg>
<div class="a" style="left:258px;top:1134px;width:1310px;height:1px;background:#d9dde2"></div>
<div class="a" style="left:270px;top:1154.4px;width:16px;height:16px;background:linear-gradient(#ffffff,#eef0f2);border:1px solid #bfc3c8;border-radius:3px;box-sizing:border-box"></div>
<div class="t r" style="left:310.3px;top:1155.00px;font-size:14px;line-height:14px;font-weight:400;color:#2f5fdc;letter-spacing:-0.1px;">Cortado</div>
<div class="t r" style="left:646.4px;top:1155.00px;font-size:14px;line-height:14px;font-weight:400;color:#24a03b;letter-spacing:-0.16px;">2 links</div>
<div class="t r" style="left:819.4px;top:1155.00px;font-size:14px;line-height:14px;font-weight:400;color:#3b3e44;letter-spacing:0.05px;">Item</div>
<div class="t r" style="left:964.8px;top:1155.00px;font-size:14px;line-height:14px;font-weight:400;color:#3b3e44;letter-spacing:-0.2px;">EN Coffee</div>
<div class="t r" style="left:1197.5px;top:1155.00px;font-size:14px;line-height:14px;font-weight:400;color:#3b3e44;letter-spacing:-0.1px;">$4.50</div>
<div class="t r" style="left:1363.5px;top:1155.00px;font-size:14px;line-height:14px;font-weight:400;color:#3b3e44;letter-spacing:-0.1px;">$1.35</div>
<svg class="a" style="left:1534px;top:1159.5px" width="16" height="5" viewBox="0 0 16 5"><circle cx="2" cy="2.5" r="2.1" fill="#000"/><circle cx="8" cy="2.5" r="2.1" fill="#000"/><circle cx="14" cy="2.5" r="2.1" fill="#000"/></svg>
<div class="a" style="left:258px;top:1188px;width:1310px;height:1px;background:#d9dde2"></div>
<div class="a" style="left:270px;top:1208.4px;width:16px;height:16px;background:linear-gradient(#ffffff,#eef0f2);border:1px solid #bfc3c8;border-radius:3px;box-sizing:border-box"></div>
<div class="t r" style="left:310.3px;top:1209.00px;font-size:14px;line-height:14px;font-weight:400;color:#2f5fdc;letter-spacing:-0.1px;">Croissant</div>
<div class="t r" style="left:646.4px;top:1209.00px;font-size:14px;line-height:14px;font-weight:400;color:#24a03b;letter-spacing:-0.16px;">1 link</div>
<div class="t r" style="left:819.4px;top:1209.00px;font-size:14px;line-height:14px;font-weight:400;color:#3b3e44;letter-spacing:0.05px;">Item</div>
<div class="t r" style="left:964.8px;top:1209.00px;font-size:14px;line-height:14px;font-weight:400;color:#3b3e44;letter-spacing:-0.2px;">EN Pastries</div>
<div class="t r" style="left:1197.5px;top:1209.00px;font-size:14px;line-height:14px;font-weight:400;color:#3b3e44;letter-spacing:-0.1px;">$3.50</div>
<div class="t r" style="left:1363.5px;top:1209.00px;font-size:14px;line-height:14px;font-weight:400;color:#3b3e44;letter-spacing:-0.1px;">$1.05</div>
<svg class="a" style="left:1534px;top:1213.5px" width="16" height="5" viewBox="0 0 16 5"><circle cx="2" cy="2.5" r="2.1" fill="#000"/><circle cx="8" cy="2.5" r="2.1" fill="#000"/><circle cx="14" cy="2.5" r="2.1" fill="#000"/></svg>
<div class="a" style="left:258px;top:1242px;width:1310px;height:1px;background:#d9dde2"></div>
<div class="a" style="left:1190px;top:539px;width:331px;height:142px;background:#fff;border:1px solid #d3d7dc;border-radius:8px;box-sizing:border-box;box-shadow:0 4px 12px rgba(0,0,0,0.08);z-index:10"></div>
<div class="t" style="left:1198.39px;top:550.00px;font-size:14.8px;line-height:14.8px;font-weight:700;color:#0f1013;transform-origin:0 0;transform:scaleX(0.9143);z-index:11;">Price</div>
<div class="a" style="left:1199px;top:572px;width:314px;height:36px;background:#fff;border:1px solid #bfc4ca;border-radius:4px;box-sizing:border-box;z-index:11"></div>
<div class="t r" style="left:1212.7px;top:584.00px;font-size:14px;line-height:14px;font-weight:400;color:#3b3e44;letter-spacing:0px;z-index:11;">5</div>
<div class="a" style="left:1353px;top:636px;width:81px;height:36px;background:linear-gradient(#ffffff,#f1f2f4);border:1px solid #c6c9ce;border-radius:4px;box-sizing:border-box;z-index:11"></div>
<div class="t" style="left:1372.00px;top:647.00px;font-size:14.8px;line-height:14.8px;font-weight:700;color:#2b2d31;transform-origin:0 0;transform:scaleX(0.8750);z-index:11;">Cancel</div>
<div class="a" style="left:1446px;top:636px;width:67px;height:36px;background:#a3b3ee;border-radius:4px;z-index:11"></div>
<div class="t" style="left:1464.70px;top:647.00px;font-size:14.8px;line-height:14.8px;font-weight:700;color:#ffffff;transform-origin:0 0;transform:scaleX(0.8529);z-index:11;">Save</div>
<div class="a" style="left:1533px;top:1132px;width:48px;height:48px;border-radius:50%;background:#1b1c20;box-shadow:0 1px 5px rgba(0,0,0,0.14);z-index:20"></div>
<svg class="a" style="left:1550px;top:1147px;z-index:21" width="14" height="18" viewBox="0 0 21 28">
<path d="M10.5 1 L3 11.5 Q0.8 15 2.2 19 L6 25.5 Q7.5 27.5 10 27.5 L13 27.5 Q15.5 27.5 17 25 L19.2 20.5 Q20.5 17.5 18.8 14.5 L15 8.5 L12.5 12.8 L15.5 17.5 Q16.3 19 15.4 20.6 L13.8 23.3 Q13 24.5 11.5 24.5 L10 24.5 Q8.6 24.5 7.8 23.2 L5.2 18.6 Q4.4 17 5.3 15.2 L11.7 5.7 Z" fill="#e42320"/>
<path d="M10.6 9.5 L6.8 15.5 Q6.2 16.6 6.8 17.8 L9.6 22.5 L11.3 22.5 L12.8 20 Q13.3 19 12.7 18 L10.2 14 L12.1 11 Z" fill="#e42320"/>
</svg>
</body></html>
